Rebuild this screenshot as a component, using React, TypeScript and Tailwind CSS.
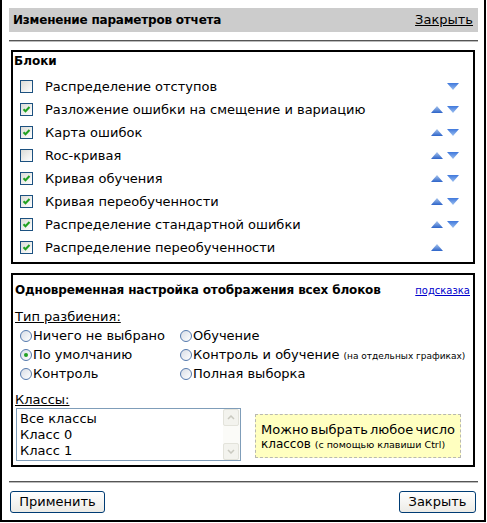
import React from "react";

/* ─── data ─── */

const BLOCKS = [
  { label: "Распределение отступов", checked: false, up: false, down: true },
  { label: "Разложение ошибки на смещение и вариацию", checked: true, up: true, down: true },
  { label: "Карта ошибок", checked: true, up: true, down: true },
  { label: "Roc-кривая", checked: false, up: true, down: true },
  { label: "Кривая обучения", checked: true, up: true, down: true },
  { label: "Кривая переобученности", checked: true, up: true, down: true },
  { label: "Распределение стандартной ошибки", checked: true, up: true, down: true },
  { label: "Распределение переобученности", checked: true, up: true, down: false },
];

const CLASSES = ["Все классы", "Класс 0", "Класс 1"];

/* ─── small bits ─── */

function CheckBox({ checked }: { checked: boolean }) {
  return (
    <span className="inline-flex h-[13px] w-[13px] shrink-0 items-center justify-center border border-[#1c5180] bg-gradient-to-br from-[#dcdcd7] to-white">
      {checked && (
        <svg width="9" height="9" viewBox="0 0 9 9">
          <path d="M1.5 4.2 L3.5 6.3 L7.5 2" fill="none" stroke="#21a121" strokeWidth="2" />
        </svg>
      )}
    </span>
  );
}

function Radio({ checked }: { checked?: boolean }) {
  return (
    <span className="inline-flex h-[12px] w-[12px] shrink-0 items-center justify-center rounded-full border border-[#5479ad] bg-gradient-to-br from-[#d8dde6] to-white">
      {checked && <span className="h-[4px] w-[4px] rounded-full bg-[#21a121]" />}
    </span>
  );
}

function Arrow({ dir }: { dir: "up" | "down" }) {
  const id = dir === "up" ? "gUp" : "gDown";
  return (
    <svg width="12" height="7" viewBox="0 0 12 7">
      <defs>
        <linearGradient id={id} x1="0" y1="0" x2="0" y2="1">
          {dir === "up" ? (
            <>
              <stop offset="0" stopColor="#a9c6ee" />
              <stop offset="1" stopColor="#2d64c9" />
            </>
          ) : (
            <>
              <stop offset="0" stopColor="#3f78dc" />
              <stop offset="1" stopColor="#9dc0f0" />
            </>
          )}
        </linearGradient>
      </defs>
      {dir === "up" ? (
        <polygon points="6,0 12,7 0,7" fill={`url(#${id})`} />
      ) : (
        <polygon points="0,0 12,0 6,7" fill={`url(#${id})`} />
      )}
    </svg>
  );
}

function XpButton({ children, className }: { children: React.ReactNode; className?: string }) {
  return (
    <button
      type="button"
      className={
        "flex h-[22px] items-center justify-center rounded-[3px] border border-[#003c74] bg-gradient-to-b from-white to-[#ecebe6] text-[13px] text-black " +
        (className ?? "")
      }
    >
      {children}
    </button>
  );
}

function ScrollBtn({ dir }: { dir: "up" | "down" }) {
  return (
    <div className="flex h-[17px] w-[16px] items-center justify-center rounded-[2px] border border-[#e3e3db] bg-[#f3f3ee]">
      <svg width="8" height="5" viewBox="0 0 8 5">
        <path
          d={dir === "up" ? "M1 4 L4 1 L7 4" : "M1 1 L4 4 L7 1"}
          fill="none"
          stroke="#c9c9c0"
          strokeWidth="1.5"
        />
      </svg>
    </div>
  );
}

/* ─── page ─── */

export default function App() {
  return (
    <div className="h-[523px] w-[487px] bg-white font-['DejaVu_Sans',Verdana,sans-serif] text-[13px] text-black">
      <div className="flex h-[522px] w-[486px] flex-col border-x-2 border-b-2 border-black pl-[7px] pr-[6px] pt-[8px]">
        {/* header */}
        <div className="flex h-[24px] items-center justify-between bg-[#cccccc] pl-[4px] pr-[5px]">
          <span className="text-[12px] font-bold tracking-[-0.2px]">Изменение параметров отчета</span>
          <a className="underline">Закрыть</a>
        </div>
        <div className="mt-[8px] h-[2px] border-t border-[#555] bg-[#bbb]" />

        {/* blocks */}
        <div className="ml-[2px] mr-[3px] mt-[8px] flex h-[214px] flex-col border-2 border-black pl-[1px] pt-[1px]">
          <div className="h-[16px] text-[12px] font-bold leading-[16px]">Блоки</div>
          <div className="mt-[6px] flex flex-col">
            {BLOCKS.map((b) => (
              <div key={b.label} className="flex h-[23px] items-center pl-[6px]">
                <CheckBox checked={b.checked} />
                <span className="ml-[12px] flex-1 whitespace-nowrap">{b.label}</span>
                <div className="mr-[14px] flex w-[28px] items-center gap-[4px]">
                  <span className="w-[12px]">{b.up && <Arrow dir="up" />}</span>
                  <span className="w-[12px]">{b.down && <Arrow dir="down" />}</span>
                </div>
              </div>
            ))}
          </div>
        </div>

        {/* all blocks setup */}
        <div className="ml-[2px] mr-[3px] mt-[9px] flex h-[194px] flex-col border-2 border-black pl-[2px] pr-[3px] pt-[6px]">
          <div className="flex h-[18px] items-center justify-between">
            <span className="text-[12px] font-bold tracking-[-0.15px]">
              Одновременная настройка отображения всех блоков
            </span>
            <a className="text-[10px] text-[#0000cc] underline">подсказка</a>
          </div>
          <div className="mt-[9px] leading-[17px]">
            <span className="underline">Тип разбиения:</span>
          </div>
          <div className="mt-[1px] grid grid-cols-[160px_1fr] pl-[5px]">
            <div className="flex flex-col">
              <label className="flex h-[19px] items-center gap-[1px]">
                <Radio />
                <span>Ничего не выбрано</span>
              </label>
              <label className="flex h-[19px] items-center gap-[1px]">
                <Radio checked />
                <span>По умолчанию</span>
              </label>
              <label className="flex h-[19px] items-center gap-[1px]">
                <Radio />
                <span>Контроль</span>
              </label>
            </div>
            <div className="flex flex-col">
              <label className="flex h-[19px] items-center gap-[1px]">
                <Radio />
                <span>Обучение</span>
              </label>
              <label className="flex h-[19px] items-center gap-[1px] whitespace-nowrap">
                <Radio />
                <span>
                  Контроль и обучение <span className="text-[9px]">(на отдельных графиках)</span>
                </span>
              </label>
              <label className="flex h-[19px] items-center gap-[1px]">
                <Radio />
                <span>Полная выборка</span>
              </label>
            </div>
          </div>

          <div className="mt-[8px] leading-[17px]">
            <span className="underline">Классы:</span>
          </div>
          <div className="flex items-start">
            <div className="ml-[1px] flex h-[53px] w-[225px] border border-[#7f9db9] bg-white">
              <div className="flex flex-1 flex-col pl-[3px] pt-[2px] leading-[16px]">
                {CLASSES.map((c) => (
                  <div key={c}>{c}</div>
                ))}
              </div>
              <div className="flex w-[17px] flex-col justify-between bg-[#fbfbf8]">
                <ScrollBtn dir="up" />
                <ScrollBtn dir="down" />
              </div>
            </div>
            <div className="ml-[14px] mt-[6px] h-[44px] w-[206px] border border-dashed border-[#b8b8b0] bg-[#ffffc0] px-[5px] pt-[7px] leading-[15px]">
              <div className="flex justify-between">
                <span>Можно</span>
                <span>выбрать</span>
                <span>любое</span>
                <span>число</span>
              </div>
              <div className="whitespace-nowrap text-[12px]">
                классов <span className="text-[9.5px]">(с помощью клавиши Ctrl)</span>
              </div>
            </div>
          </div>
        </div>

        <div className="mt-[14px] h-[2px] border-t border-[#555] bg-[#bbb]" />

        {/* footer */}
        <div className="mt-[8px] flex justify-between pl-[1px] pr-[2px]">
          <XpButton className="w-[95px]">Применить</XpButton>
          <XpButton className="w-[77px]">Закрыть</XpButton>
        </div>
      </div>
    </div>
  );
}
